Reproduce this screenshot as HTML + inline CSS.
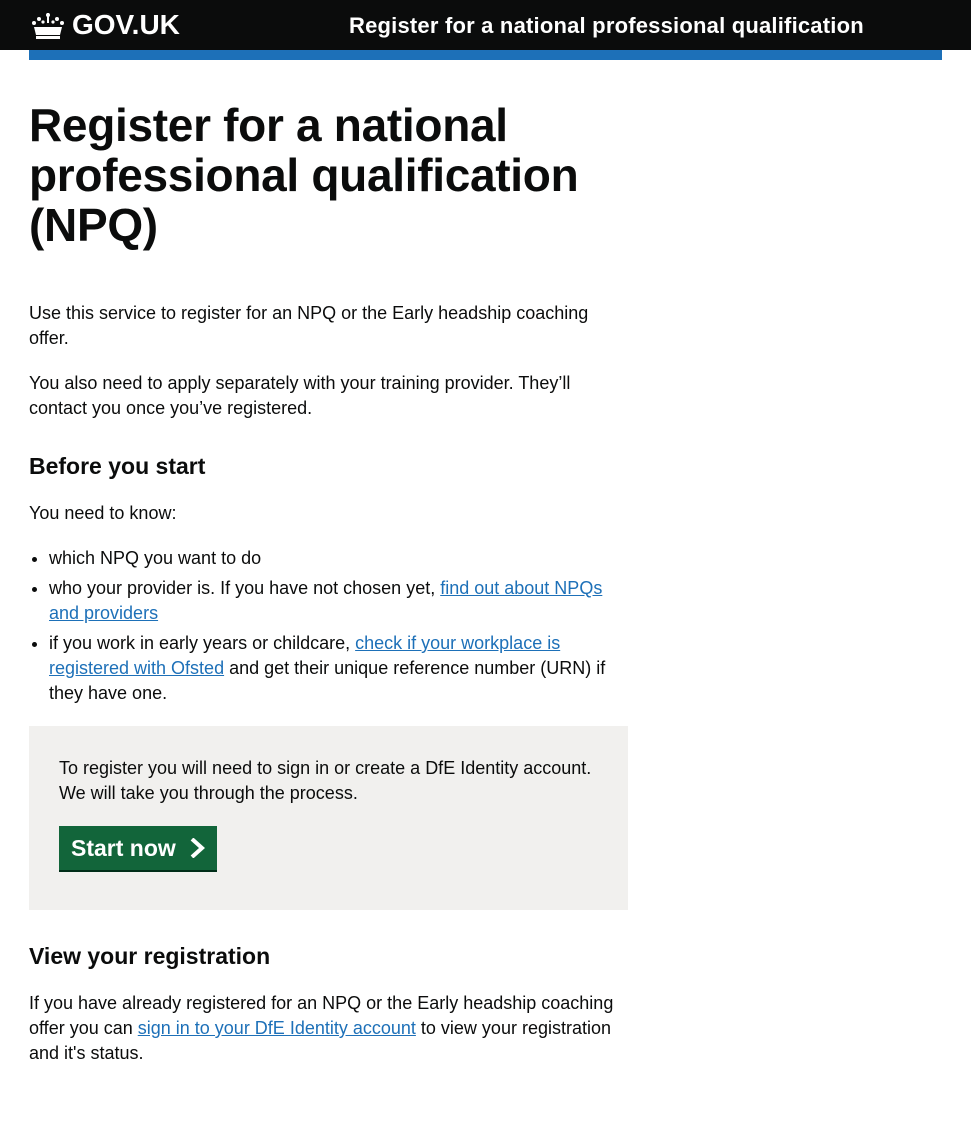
<!DOCTYPE html>
<html><head><meta charset="utf-8"><style>
*{box-sizing:border-box}
body{margin:0;background:#fff;font-family:"Liberation Sans",Arial,sans-serif;color:#0b0c0c;width:971px;height:1124px;overflow:hidden}
.hdr{background:#0b0c0c;height:50px;position:relative}
.logo{position:absolute;left:30px;top:9px;color:#fff;font-weight:bold;font-size:28px;line-height:32px;display:flex;align-items:center}
.logo svg{margin-right:6px}
.svc{position:absolute;left:349px;top:12px;color:#fff;font-weight:bold;font-size:22px;line-height:28px;letter-spacing:0.2px}
.bar{position:absolute;left:29px;top:50px;width:913px;height:10px;background:#1d70b8}
.main{position:absolute;left:29px;top:0;width:600px}
h1{position:absolute;top:100px;margin:0;font-size:46px;line-height:50px;font-weight:bold;letter-spacing:-0.3px;width:600px}
p,li{font-size:18px;line-height:25px;margin:0}
a{color:#1d70b8;text-decoration:underline}
h2{font-size:23px;line-height:30px;margin:0;font-weight:bold}
.abs{position:absolute;left:0;width:600px}
ul{margin:0;padding:0 0 0 20px}
li{margin-bottom:5px}
.box{position:absolute;left:0;top:726px;width:599px;height:184px;background:#f1f0ee}
.btn{position:absolute;left:30px;top:100px;width:158px;height:44px;background:#12653a;box-shadow:0 2px 0 #002d18;color:#fff;font-weight:bold;font-size:23px;line-height:44px;padding-left:12px}
</style></head><body>
<div class="hdr">
<div class="logo"><svg width="36" height="28" viewBox="0 0 36 28" fill="#fff"><circle cx="18" cy="4" r="2"/><rect x="17" y="2" width="2" height="10"/><circle cx="4" cy="12" r="2"/><circle cx="9" cy="8" r="2"/><circle cx="27" cy="8" r="2"/><circle cx="32" cy="12" r="2"/><circle cx="13" cy="11" r="1.6"/><circle cx="23" cy="11" r="1.6"/><path d="M4 16 L32 16 L30 24 L6 24 Z"/><rect x="6" y="25" width="24" height="3"/></svg>GOV.UK</div>
<div class="svc">Register for a national professional qualification</div>
</div>
<div class="bar"></div>
<div class="main">
<h1>Register for a national professional qualification (NPQ)</h1>
<p class="abs" style="top:301px">Use this service to register for an NPQ or the Early headship coaching offer.</p>
<p class="abs" style="top:371px">You also need to apply separately with your training provider. They’ll contact you once you’ve registered.</p>
<h2 class="abs" style="top:451px">Before you start</h2>
<p class="abs" style="top:501px">You need to know:</p>
<ul class="abs" style="top:546px">
<li>which NPQ you want to do</li>
<li>who your provider is. If you have not chosen yet, <a>find out about NPQs and providers</a></li>
<li>if you work in early years or childcare, <a>check if your workplace is registered with Ofsted</a> and get their unique reference number (URN) if they have one.</li>
</ul>
<div class="box">
<p style="position:absolute;left:30px;top:30px;width:550px">To register you will need to sign in or create a DfE Identity account. We will take you through the process.</p>
<div class="btn">Start now <svg width="16" height="20" viewBox="0 0 16 20" style="position:absolute;right:12px;top:12px"><path d="M3 1 L13 10 L3 19" stroke="#fff" stroke-width="4" fill="none"/></svg></div>
</div>
<h2 class="abs" style="top:941px">View your registration</h2>
<p class="abs" style="top:991px">If you have already registered for an NPQ or the Early headship coaching offer you can <a>sign in to your DfE Identity account</a> to view your registration and it's status.</p>
</div>
</body></html>
